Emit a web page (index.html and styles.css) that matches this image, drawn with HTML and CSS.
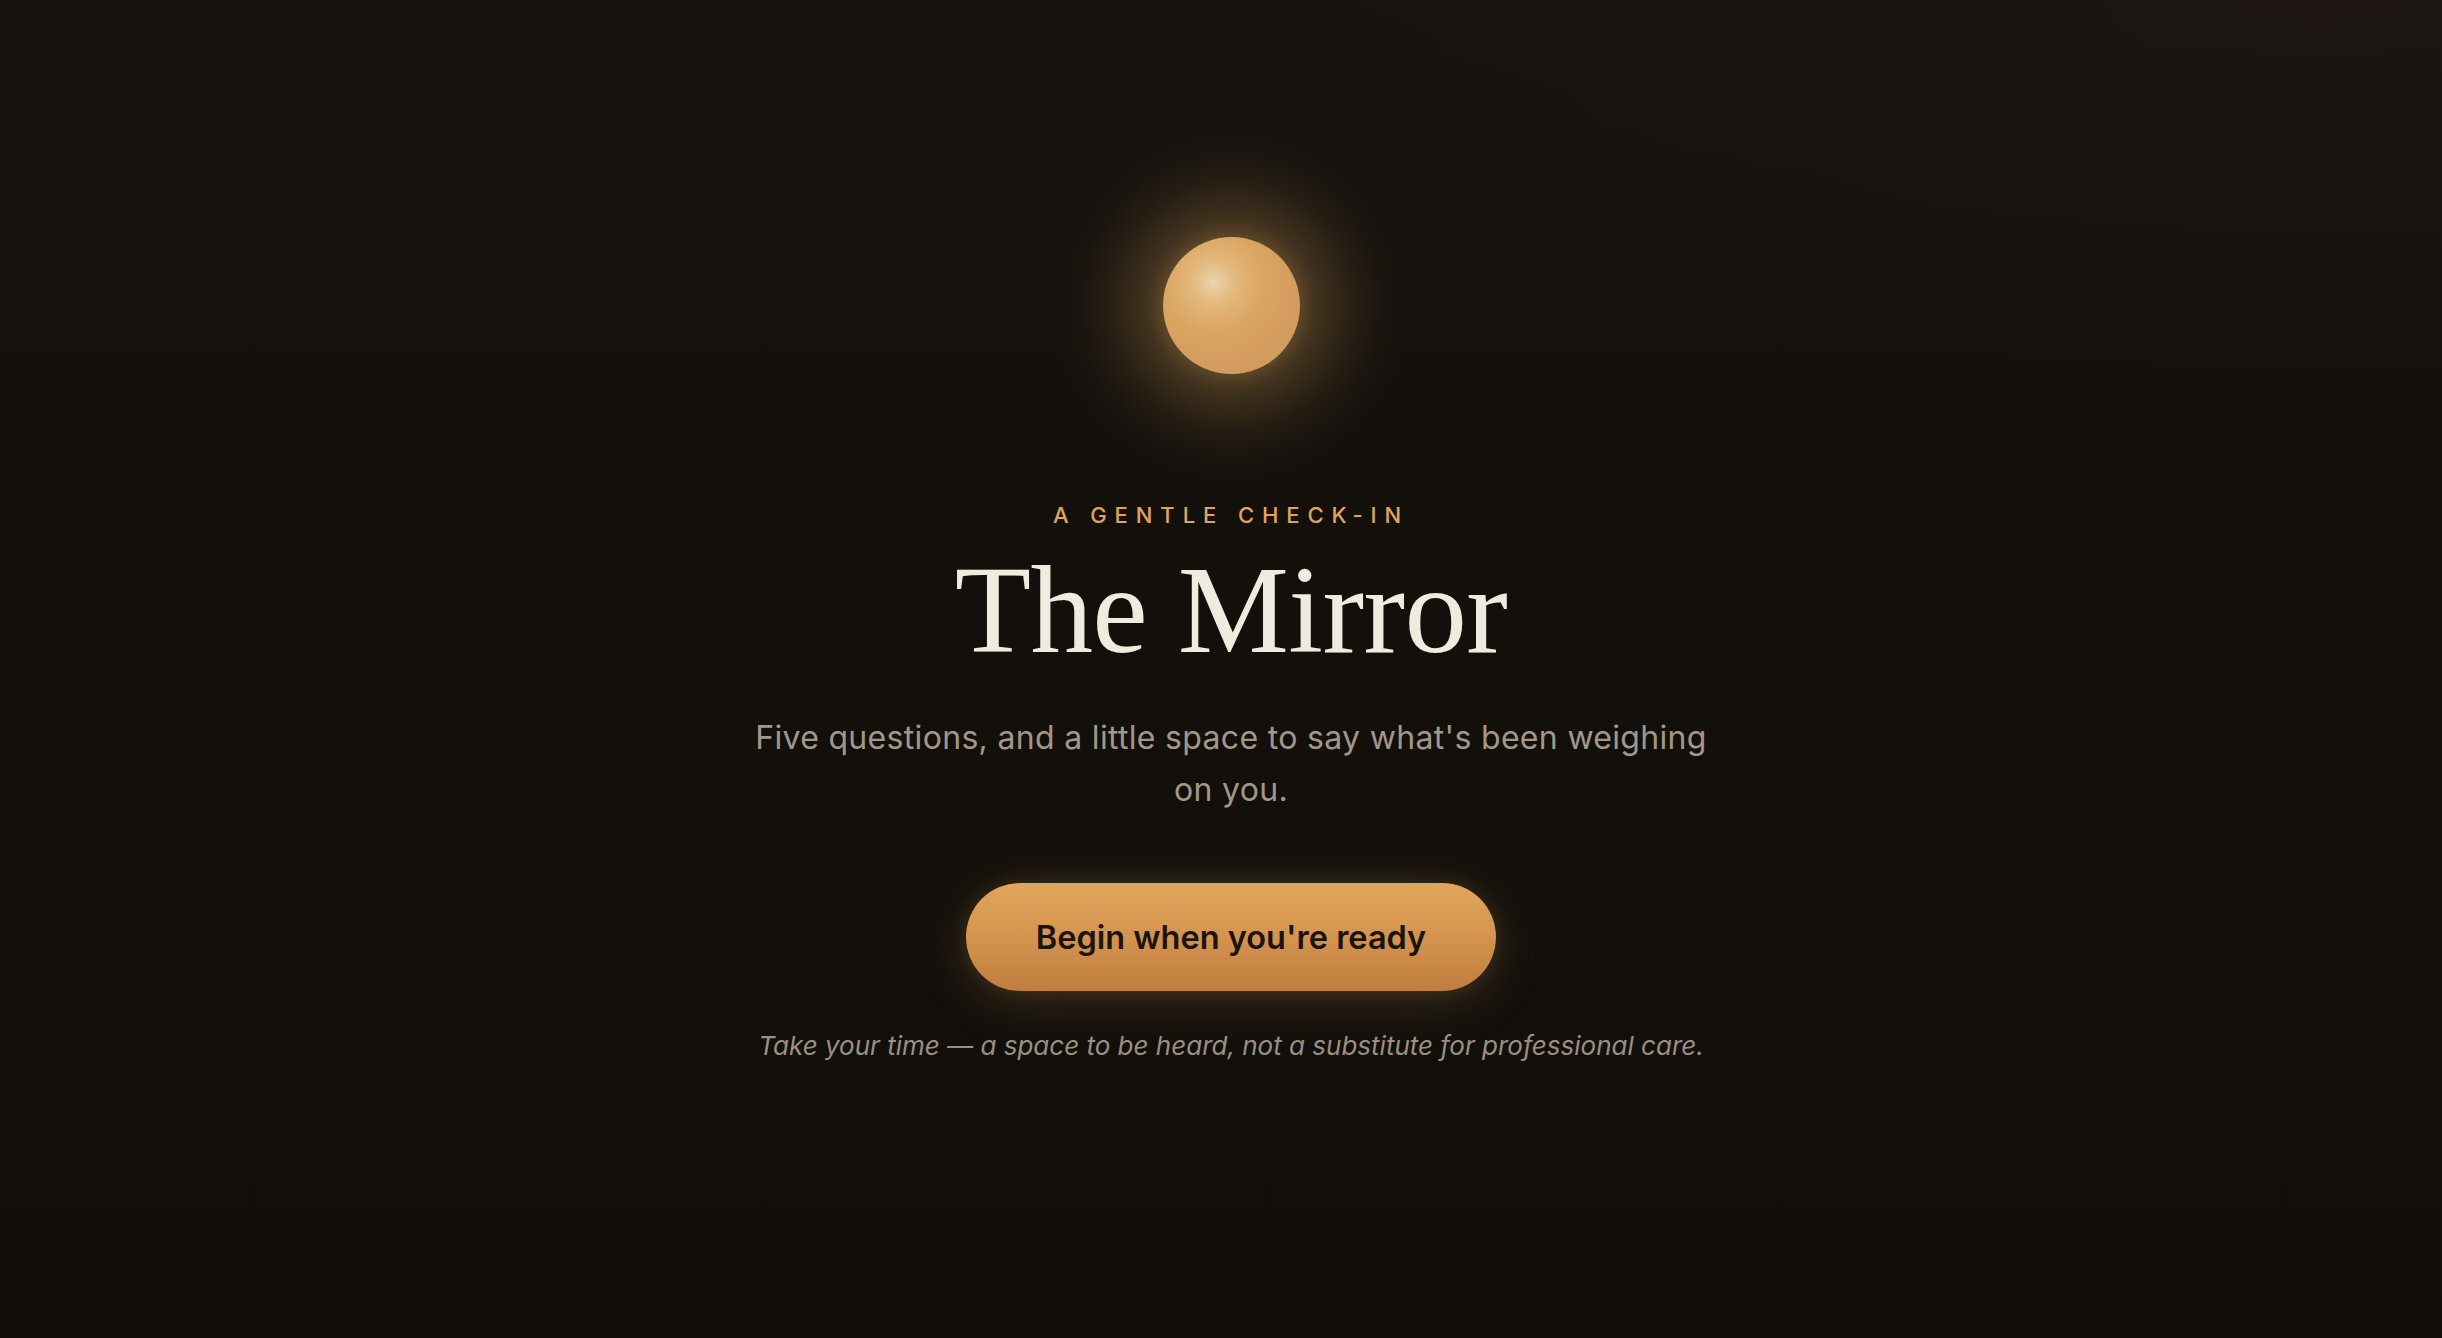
FILE: index.html
```html
<!DOCTYPE html>
<html lang="en">
<head>
<meta charset="utf-8">
<title>The Mirror</title>
<link rel="stylesheet" href="styles.css">
</head>
<body>
<main class="intro">
  <div class="orb"></div>
  <p class="eyebrow">A gentle check-in</p>
  <h1 class="title">The Mirror</h1>
  <p class="lede">Five questions, and a little space to say what's been weighing on you.</p>
  <button class="begin" type="button">Begin when you're ready</button>
  <p class="note">Take your time — a space to be heard, not a substitute for professional care.</p>
</main>
</body>
</html>
```
FILE: styles.css
```css
html, body {
  margin: 0;
  height: 100%;
}
body {
  background:
    radial-gradient(ellipse 60% 40% at 95% 0%, rgba(40, 28, 24, 0.35), transparent 70%),
    linear-gradient(180deg, #17130f 0%, #13100c 45%, #120f0b 100%);
  color: #efe8dc;
  font-family: Inter, "Noto Sans", sans-serif;
  overflow: hidden;
}
.intro {
  box-sizing: border-box;
  min-height: 100vh;
  display: flex;
  flex-direction: column;
  align-items: center;
  justify-content: center;
  padding: 0 0 36px 20px;
  text-align: center;
}
.orb {
  position: relative;
  z-index: 0;
  width: 137px;
  height: 137px;
  border-radius: 50%;
  flex: none;
  background:
    radial-gradient(circle at 37% 33%, #fdf4e4 0%, #f7dfb6 8%, #eec48c 20%, #e3ac6a 40%, #d9a066 66%, #cf9a6b 100%);
  box-shadow: 0 0 18px 4px rgba(200, 150, 80, 0.18);
  margin: 0 0 130px;
}
.orb::before {
  content: "";
  position: absolute;
  z-index: -1;
  left: -110px;
  top: -110px;
  right: -110px;
  bottom: -110px;
  border-radius: 50%;
  background: radial-gradient(circle closest-side,
    rgba(200, 150, 80, 0.32) 38%,
    rgba(200, 150, 80, 0.2) 54%,
    rgba(200, 150, 80, 0.09) 70%,
    rgba(200, 150, 80, 0.025) 86%,
    rgba(200, 150, 80, 0) 100%);
}
.eyebrow {
  margin: 0 0 22px;
  font-size: 22px;
  line-height: 22px;
  letter-spacing: 0.36em;
  text-transform: uppercase;
  color: #e0a55c;
  font-weight: 500;
}
.title {
  margin: 0 0 39px;
  font-family: "Liberation Serif", "Times New Roman", serif;
  font-weight: 400;
  font-size: 125px;
  line-height: 125px;
  color: #f0eadf;
  letter-spacing: -0.005em;
}
.lede {
  margin: 0 0 67px;
  max-width: 975px;
  font-size: 32px;
  line-height: 52px;
  letter-spacing: 0.01em;
  color: #a29888;
}
.begin {
  box-sizing: border-box;
  height: 108px;
  padding: 0 70px;
  border: 0;
  border-radius: 54px;
  background: linear-gradient(180deg, #e0a65d 0%, #d4944f 50%, #c07d40 100%);
  color: #1b140c;
  font-family: Inter, "Noto Sans", sans-serif;
  font-size: 32.5px;
  font-weight: 600;
  box-shadow:
    0 8px 50px rgba(215, 155, 85, 0.22),
    0 0 20px rgba(215, 155, 85, 0.12);
  margin: 0 0 35px;
  cursor: pointer;
}
.note {
  margin: 0;
  font-size: 26px;
  line-height: 39px;
  font-style: italic;
  color: #9a8f80;
}
```
